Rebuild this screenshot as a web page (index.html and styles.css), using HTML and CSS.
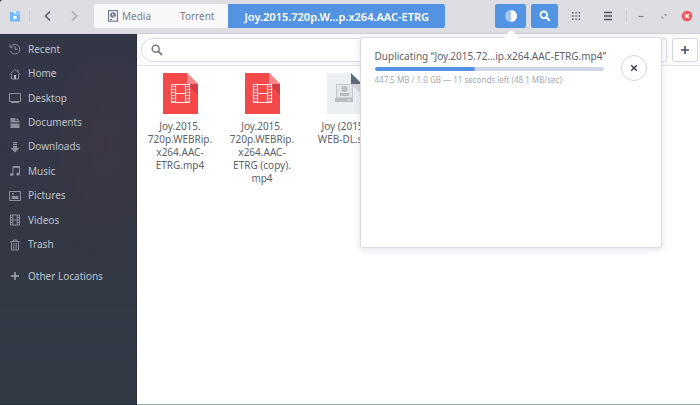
FILE: index.html
```html
<!DOCTYPE html>
<html lang="en">
<head>
<meta charset="utf-8">
<meta name="viewport" content="width=device-width, initial-scale=1">
<title>Files</title>
<link rel="stylesheet" href="styles.css">
</head>
<body>
<header class="headerbar">
  <svg class="app-icon" width="12" height="12" viewBox="0 0 12 12" aria-hidden="true"><path fill="#70b9fa" d="M1 2h4l1 2h5v7.500H1z"/><path fill="#8cc8fb" d="M7 1h4v4H7z"/><circle cx="6" cy="7.500" r="1.800" fill="#fff"/><path fill="#d8ecfd" d="M4 1h2v3H5z"/></svg>
  <span class="rule"></span>
  <button class="nav back" type="button" aria-label="Back"><svg width="10" height="12" viewBox="0 0 10 12"><path d="M7 1.500 2.500 6 7 10.500" fill="none" stroke="currentColor" stroke-width="1.700"/></svg></button>
  <button class="nav forward" type="button" aria-label="Forward"><svg width="10" height="12" viewBox="0 0 10 12"><path d="M3 1.500 7.500 6 3 10.500" fill="none" stroke="currentColor" stroke-width="1.500"/></svg></button>
  <nav class="pathbar" aria-label="Path">
    <button class="crumb crumb-media" type="button"><svg width="10" height="12" viewBox="0 0 10 12" aria-hidden="true"><rect x=".6" y=".6" width="8.800" height="10.600" fill="none" stroke="#6b7488" stroke-width="1.100"/><circle cx="5" cy="5" r="2.800" fill="#6b7488"/><circle cx="4.700" cy="4.600" r=".9" fill="#fff"/><path d="m5 6 3 3" stroke="#f7f7f8" stroke-width="1"/><path d="M2 9.500h2" stroke="#6b7488"/></svg>Media</button>
    <button class="crumb crumb-torrent" type="button">Torrent</button>
    <button class="crumb crumb-current" type="button">Joy.2015.720p.W…p.x264.AAC-ETRG</button>
  </nav>
  <div class="tools">
    <div class="operations">
      <button class="tool tool-wide" type="button" aria-label="File operations"><svg width="14" height="14" viewBox="0 0 14 14"><circle cx="7" cy="7" r="6" fill="#a5c7f2"/><path d="M7 1a6 6 0 0 1 0 12z" fill="#fff"/></svg></button>
      <section class="popover">
        <div class="task">
          <div class="task-info">
            <label class="task-title" for="copy">Duplicating “Joy.2015.72…ip.x264.AAC-ETRG.mp4”</label>
            <progress class="bar" id="copy" max="1024" value="447.5"></progress>
            <p class="task-detail">447.5 MB / 1.0 GB — 11 seconds left (48.1 MB/sec)</p>
          </div>
          <button class="cancel" type="button" aria-label="Cancel"><svg width="8" height="8" viewBox="0 0 8 8"><path d="m1.200 1.200 5.600 5.600m0-5.600L1.200 6.800" stroke="#3e4556" stroke-width="1.600"/></svg></button>
        </div>
      </section>
    </div>
    <button class="tool" type="button" aria-label="Search"><svg width="12" height="12" viewBox="0 0 12 12"><circle cx="4.800" cy="4.800" r="3.300" fill="none" stroke="#fff" stroke-width="1.800"/><path d="m7.300 7.300 3.500 3.500" stroke="#fff" stroke-width="2.100"/></svg></button>
    <button class="plain plain-first" type="button" aria-label="Icon view"><svg width="10" height="10" viewBox="0 0 10 10" fill="#596277"><path d="M1 1h1.500v1.500H1zM4.300 1h1.500v1.500H4.300zM7.600 1h1.500v1.500H7.600zM1 4.300h1.500v1.500H1zM4.300 4.300h1.500v1.500H4.300zM7.600 4.300h1.500v1.500H7.600zM1 7.600h1.500v1.500H1zM4.300 7.600h1.500v1.500H4.300zM7.600 7.600h1.500v1.500H7.600z"/></svg></button>
    <button class="plain" type="button" aria-label="Menu"><svg width="10" height="10" viewBox="0 0 10 10"><path d="M1 1.500h8M1 5h8M1 8.500h8" stroke="#4f586d" stroke-width="1.500"/></svg></button>
  </div>
  <span class="rule"></span>
  <div class="window-controls">
    <button class="control" type="button" aria-label="Minimize"><svg width="12" height="12" viewBox="0 0 12 12"><path d="M3.500 6.500h5" stroke="#7b8291" stroke-width="1.200"/></svg></button>
    <button class="control" type="button" aria-label="Maximize"><svg width="12" height="12" viewBox="0 0 12 12"><path d="M6 4h2.500v2.500zM3.500 6 6 8.500H3.500z" fill="#858b99"/></svg></button>
    <button class="control" type="button" aria-label="Close"><svg width="12" height="12" viewBox="0 0 12 12"><circle cx="6" cy="6" r="5.300" fill="#f8535c"/><path d="m4 4 4 4m0-4-4 4" stroke="#fff" stroke-width="1.500"/></svg></button>
  </div>
</header>
<div class="body">
  <aside class="sidebar">
    <nav class="places" aria-label="Places">
      <a class="place" href="#"><svg viewBox="0 0 12 12"><path d="M2 3.500A4.800 4.800 0 1 1 1.500 8M1 1.500v2.700h2.700M6 3v3.300h2.500"/></svg>Recent</a>
      <a class="place" href="#"><svg viewBox="0 0 12 12"><path d="M.8 6.500 6 1.300l5.200 5.200M2.500 6v5h7V6M9 1.500V4"/><path class="solid" d="M5 7h2v4H5z"/></svg>Home</a>
      <a class="place" href="#"><svg viewBox="0 0 12 12"><path d="M.5 1.500h11v8H.5zM2 10.500h8"/></svg>Desktop</a>
      <a class="place" href="#"><svg viewBox="0 0 12 12"><path class="fill" d="M1.500 1h5v3h4v1.500h-9zM7.500 1l3 2.500h-3zM1.500 6.500h9V11h-9z"/></svg>Documents</a>
      <a class="place" href="#"><svg viewBox="0 0 12 12"><path class="fill" d="M4 1h4v1.300H4zM4 3h4v1.300H4zM4 5h4v2h2.500L6 11.500 1.500 7H4z"/></svg>Downloads</a>
      <a class="place" href="#"><svg viewBox="0 0 12 12"><path d="M4 9.500V1.500h6.500v7M4 2.500h6.500"/><ellipse class="fill" cx="2.700" cy="9.500" rx="1.900" ry="1.500"/><ellipse class="fill" cx="9" cy="9" rx="1.900" ry="1.500"/></svg>Music</a>
      <a class="place" href="#"><svg viewBox="0 0 12 12"><path d="M.5 1.500h11v9H.5z"/><path class="fill" d="M2.500 9V7l2-2 1.500 1.500 1.500-1 2 1.500v2zM3 3h1.500v1.500H3z"/></svg>Pictures</a>
      <a class="place" href="#"><svg viewBox="0 0 12 12"><path d="M1.500 1h9v10h-9zM3.800 1v10M8.200 1v10M3.800 6h4.400M1.500 3.500h2M1.500 6h2M1.500 8.500h2M8.500 3.500h2M8.500 6h2M8.500 8.500h2"/></svg>Videos</a>
      <a class="place" href="#"><svg viewBox="0 0 12 12"><path d="M1.500 2.500h9M4.500 2V1h3v1M2.500 3v8h7V3M4.800 4v6M7.200 4v6"/></svg>Trash</a>
    </nav>
    <a class="place other" href="#"><svg viewBox="0 0 12 12"><path class="thick" d="M6 2v8M2 6h8"/></svg>Other Locations</a>
  </aside>
  <main class="content">
    <div class="searchbar">
      <label class="search-field"><svg width="12" height="12" viewBox="0 0 12 12" aria-hidden="true"><circle cx="4.700" cy="4.700" r="3.500" fill="none" stroke="#767b84" stroke-width="1.500"/><path d="m7.300 7.300 3.700 3.700" stroke="#767b84" stroke-width="1.900"/></svg><input class="search-input" type="search" aria-label="Search files"></label>
      <button class="add" type="button" aria-label="Add filter"><svg width="10" height="10" viewBox="0 0 10 10"><path d="M5 1v8M1 5h8" stroke="#4a5162" stroke-width="1.600"/></svg></button>
    </div>
    <ul class="files">
      <li class="file">
        <svg width="35" height="41" viewBox="0 0 35 41" aria-hidden="true"><path d="M0 0h24l11 11v30H0z" fill="#f54848"/><path d="m24 11 11 11V11z" fill="#cf3f43"/><path d="M24 0v11h11z" fill="#fa8787"/><path d="M8.500 11.500h18v18h-18zM12.500 11.500v18M22.500 11.500v18M12.500 20.500h10" fill="none" stroke="#fde3e3" stroke-width="1.200"/><path d="M10.500 13v16M24.500 13v16" stroke="#fbcaca" stroke-width="2.500" stroke-dasharray="1 2"/></svg>
        <span class="name">Joy.2015.<br>720p.WEBRip.<br>x264.AAC-<br>ETRG.mp4</span>
      </li>
      <li class="file">
        <svg width="35" height="41" viewBox="0 0 35 41" aria-hidden="true"><path d="M0 0h24l11 11v30H0z" fill="#f54848"/><path d="m24 11 11 11V11z" fill="#cf3f43"/><path d="M24 0v11h11z" fill="#fa8787"/><path d="M8.500 11.500h18v18h-18zM12.500 11.500v18M22.500 11.500v18M12.500 20.500h10" fill="none" stroke="#fde3e3" stroke-width="1.200"/><path d="M10.500 13v16M24.500 13v16" stroke="#fbcaca" stroke-width="2.500" stroke-dasharray="1 2"/></svg>
        <span class="name">Joy.2015.<br>720p.WEBRip.<br>x264.AAC-<br>ETRG (copy).<br>mp4</span>
      </li>
      <li class="file">
        <svg width="35" height="41" viewBox="0 0 35 41" aria-hidden="true"><path d="M0 0h24l11 11v30H0z" fill="#eceff1"/><path d="m24 11 11 11V11z" fill="#d3d7da"/><path d="M24 0v11h11z" fill="#5f6c7d"/><path d="M9.500 11.500h16V25h-16z" fill="#e2e5e7" stroke="#c5c9cc"/><circle cx="17.500" cy="16" r="3" fill="#b8bcc0"/><path d="M13 20h9v3h-9zM8 25h18v4H8z" fill="#b8bcc0"/><path d="M20 27h4" stroke="#eceff1"/></svg>
        <span class="name">Joy (2015)<br>WEB-DL.srt</span>
      </li>
    </ul>
  </main>
</div>
</body>
</html>
```
FILE: styles.css
```css
* { box-sizing: border-box; }

body {
  margin: 0;
  min-height: 100vh;
  display: flex;
  flex-direction: column;
  font: 10px/13px "Noto Sans", sans-serif;
  color: #5c616c;
  background: #2c2d3e;
}

button {
  display: flex;
  align-items: center;
  justify-content: center;
  padding: 0;
  border: 0;
  background: none;
  font: inherit;
  color: inherit;
}

svg { display: block; flex: none; }

.headerbar {
  display: flex;
  align-items: center;
  height: 34px;
  padding: 0 7px 1px 9px;
  background: #dddde3;
  border-bottom: 1px solid #cfd0d8;
  border-top-left-radius: 3px;
}

.rule { width: 1px; height: 12px; background: #cdced6; }
.app-icon { margin-right: 8px; }
.nav { width: 26px; height: 24px; }
.back { margin-left: 5px; color: #5c6479; }
.forward { color: #a9adb9; }

.pathbar {
  display: flex;
  height: 24px;
  margin-left: 7px;
  border-radius: 2px;
  overflow: hidden;
  background: #f8f8f9;
}

.crumb { color: #7b808b; }
.crumb-media { gap: 4px; padding: 0 14px; }
.crumb-torrent { padding: 0 14px 0 15px; }
.crumb-current {
  padding: 0 16px;
  background: #5294e2;
  color: #fff;
  font-size: 11px;
  font-weight: 600;
}

.tools { display: flex; align-items: center; margin-left: auto; margin-right: 2px; }
.operations { position: relative; margin-right: 5px; }
.tool { width: 27px; height: 24px; border-radius: 2px; background: #5294e2; }
.tool-wide { width: 31px; }
.plain { width: 32px; height: 24px; }
.plain-first { margin-left: 2px; }

.window-controls { display: flex; gap: 11px; margin-left: 8px; }
.control { width: 12px; height: 12px; }

.popover {
  position: absolute;
  z-index: 2;
  top: 33px;
  left: 50%;
  width: 302px;
  height: 211px;
  padding: 12px 14px;
  transform: translateX(-50%);
  background: #fff;
  border: 1px solid #dadbe2;
  border-radius: 2px;
  box-shadow: 0 2px 7px rgba(60, 65, 85, .14);
}

.popover::before {
  content: "";
  position: absolute;
  top: -8px;
  left: 50%;
  margin-left: -8px;
  border: 8px solid transparent;
  border-top: 0;
  border-bottom-color: #fff;
}

.task { display: flex; align-items: center; justify-content: space-between; }
.task-info { width: 229px; }
.task-title { display: block; white-space: nowrap; }

.bar {
  display: block;
  width: 100%;
  height: 4px;
  margin: 4px 0 2px;
  appearance: none;
  border: 0;
  border-radius: 2px;
  overflow: hidden;
  background: #cfd6e6;
}
.bar::-webkit-progress-bar { background: #cfd6e6; }
.bar::-webkit-progress-value { background: #5294e2; border-radius: 2px; }
.bar::-moz-progress-bar { background: #5294e2; }

.task-detail { margin: 0; font-size: 8px; color: #a7aab1; white-space: nowrap; }
.cancel { width: 26px; height: 26px; border: 1px solid #d3d7e3; border-radius: 50%; }

.body { display: flex; flex: 1; }

.sidebar {
  width: 137px;
  padding-top: 3px;
  background:
    radial-gradient(ellipse 60px 110px at 105px 110px, rgba(74, 54, 66, .4), transparent),
    linear-gradient(#333647, #343744 45%, #323a46);
  border-bottom: 1px solid #25323b;
  border-right: 1px solid #292e39;
}

.places { display: grid; grid-auto-rows: 1fr; height: 220px; }

.place {
  display: flex;
  align-items: center;
  gap: 7px;
  padding-left: 9px;
  color: #bdc2cd;
  text-decoration: none;
}

.place svg { width: 12px; height: 12px; fill: none; stroke: #8b909d; stroke-width: 1; }
.place .fill { fill: #8b909d; stroke: none; }
.place .solid { fill: #b4b8c1; stroke: none; }
.place .thick { stroke: #a4a8b2; stroke-width: 1.5; }
.other { height: 24px; margin-top: 7px; }

.content { flex: 1; min-width: 0; background: #fff; border-bottom: 1px solid #8dada5; }

.searchbar {
  display: flex;
  gap: 5px;
  padding: 4px 2px 3px 4px;
  background: #fafafb;
  border-bottom: 1px solid #e3e4e9;
}

.search-field {
  display: flex;
  flex: 1;
  align-items: center;
  height: 24px;
  padding: 0 9px;
  background: #fff;
  border: 1px solid #d7dbe8;
  border-radius: 12px 3px 3px 12px;
}

.search-input { flex: 1; min-width: 0; margin-left: 6px; padding: 0; border: 0; outline: 0; background: none; font: inherit; }
.add { width: 26px; height: 24px; background: #fff; border: 1px solid #d3d7e4; border-radius: 3px; }

.files { display: flex; margin: 0; padding: 7px 2px; list-style: none; }
.file { display: flex; flex-direction: column; align-items: center; width: 82px; }
.name { margin-top: 6px; text-align: center; white-space: nowrap; }
```
